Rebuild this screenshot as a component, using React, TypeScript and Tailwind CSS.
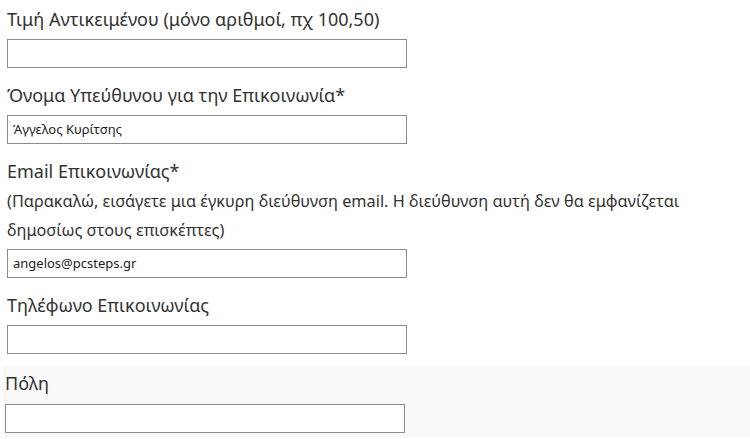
import React from "react";

const font = { fontFamily: '"Noto Sans", "Open Sans", sans-serif' };

function Field({ label, value, help }: { label: string; value?: string; help?: string[] }) {
  return (
    <div className="pl-[7px] pb-[11px]">
      <div className="text-[18px] leading-[32px] text-[#333]">{label}</div>
      {help && (
        <div className="text-[16.3px] leading-[29px] text-[#333]">
          {help.map((h, i) => (
            <div key={i}>{h}</div>
          ))}
        </div>
      )}
      <div className="mt-[4px] w-[400px] h-[29px] border border-[#8c8c8c] bg-white flex items-center px-[5px] text-[13px] text-[#222]">
        {value}
      </div>
    </div>
  );
}

export default function App() {
  return (
    <div className="w-[750px] h-[439px] bg-white overflow-hidden" style={font}>
      <div className="pt-[3px]">
        <Field label="Τιμή Αντικειμένου (μόνο αριθμοί, πχ 100,50)" />
        <Field label="Όνομα Υπεύθυνου για την Επικοινωνία*" value="Άγγελος Κυρίτσης" />
        <Field
          label="Email Επικοινωνίας*"
          help={[
            "(Παρακαλώ, εισάγετε μια έγκυρη διεύθυνση email. Η διεύθυνση αυτή δεν θα εμφανίζεται",
            "δημοσίως στους επισκέπτες)",
          ]}
          value="angelos@pcsteps.gr"
        />
        <Field label="Τηλέφωνο Επικοινωνίας" />
      </div>
      <div className="ml-[3px] bg-[#f9f9f9] pl-[2px] pt-[2px] h-[72px]">
        <div className="text-[18px] leading-[32px] text-[#333]">Πόλη</div>
        <div className="mt-[5px] w-[400px] h-[29px] border border-[#8c8c8c] bg-white" />
      </div>
    </div>
  );
}
